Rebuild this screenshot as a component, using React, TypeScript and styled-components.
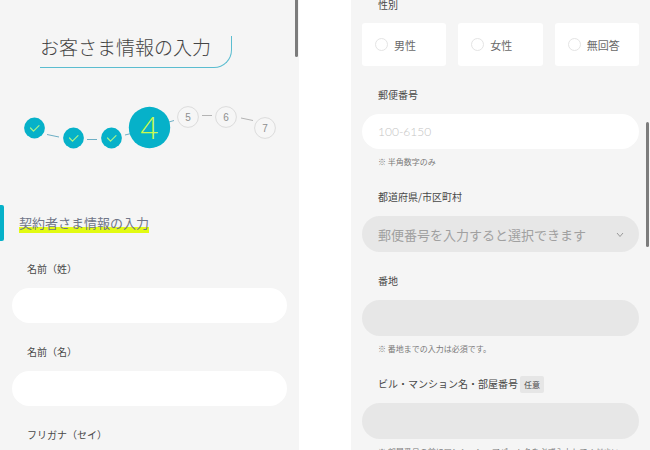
import React from "react";
import styled, { createGlobalStyle } from "styled-components";

const Global = createGlobalStyle`
  * { box-sizing: border-box; }
  html, body, #root { margin: 0; height: 100%; }
  body {
    background: #fff;
    color: #555;
    font-family: "Noto Sans CJK JP", sans-serif;
    overflow: hidden;
  }
  input, select { font-family: inherit; }
`;

const Page = styled.div`
  display: grid;
  grid-template-columns: 1fr 1fr;
  column-gap: 52px;
  height: 100vh;
  overflow: hidden;
`;

const Screen = styled.section<{ $inset: number }>`
  --inset: ${(p) => p.$inset}px;
  position: relative;
  min-width: 0;
  overflow: hidden;
  background: #f5f5f5;
`;

const ScrollThumb = styled.span<{ $top: number; $height: number }>`
  position: absolute;
  top: ${(p) => p.$top}px;
  right: 1px;
  width: 3px;
  height: ${(p) => p.$height}px;
  border-radius: 2px;
  background: #7c7c7c;
`;

const Title = styled.h1`
  width: fit-content;
  height: 32px;
  margin: 36px 0 0 40px;
  padding-right: 20px;
  border: solid #5bbdd0;
  border-width: 0 1px 1px 0;
  border-radius: 0 0 18px 0;
  color: #444;
  font-size: 19px;
  font-weight: 300;
  line-height: 21px;
  white-space: nowrap;
`;

const Steps = styled.svg`
  display: block;
  width: 256px;
  height: 48px;
  margin: 36px 0 0 22px;
`;

const StepNumber = styled.text`
  fill: #8e8e8e;
  font-family: "Liberation Sans", sans-serif;
  font-size: 10px;
  text-anchor: middle;
`;

const CurrentNumber = styled.text`
  fill: #c8fa50;
  font-family: "Open Sans", sans-serif;
  font-size: 31px;
  font-weight: 300;
  text-anchor: middle;
`;

const SectionHead = styled.div`
  display: flex;
  align-items: center;
  gap: 15px;
  height: 36px;
  margin: 53px 0 18px;
`;

const SectionBar = styled.span`
  width: 4px;
  height: 36px;
  border-radius: 0 2px 2px 0;
  background: #06b1c9;
`;

const SectionTitle = styled.h2`
  margin: 0;
  background: linear-gradient(transparent 14px, #e2fb12 14px);
  color: #707688;
  font-size: 13px;
  font-weight: 400;
  line-height: 20px;
`;

const Field = styled.div`
  margin: 0 var(--inset) 19px;
`;

const LabelRow = styled.div`
  display: flex;
  align-items: center;
  gap: 2px;
  height: 29px;
  padding: 0 0 9px calc(27px - var(--inset));
`;

const Label = styled.label`
  color: #484848;
  font-size: 10px;
  line-height: 20px;
  white-space: nowrap;
`;

const Badge = styled.span`
  padding: 0 4px;
  border-radius: 2px;
  background: #e6e6e6;
  color: #484848;
  font-size: 8px;
  line-height: 17px;
`;

const TextBox = styled.input`
  display: block;
  width: 100%;
  height: 35px;
  padding: 0 16px;
  border: 0;
  border-radius: 18px;
  background: #fff;
  font-family: Lato, sans-serif;
  font-size: 12px;
  font-weight: 300;
  &::placeholder { color: #c4c4c4; opacity: 1; }
  &:disabled { height: 36px; background: #e7e7e7; }
`;

const SelectWrap = styled.div`
  position: relative;
`;

const Select = styled.select`
  display: block;
  width: 100%;
  height: 36px;
  padding: 0 30px 0 16px;
  border: 0;
  border-radius: 18px;
  background: #e7e7e7;
  color: #a0a0a0;
  font-size: 13px;
  appearance: none;
  opacity: 1;
`;

const Chevron = styled.svg`
  position: absolute;
  top: 16px;
  right: 15px;
  width: 8px;
  height: 6px;
  pointer-events: none;
`;

const Hint = styled.p`
  margin: 7px 0 0 16px;
  color: #7a7a7a;
  font-size: 8px;
  line-height: 12px;
  white-space: nowrap;
`;

const Choices = styled.fieldset`
  display: grid;
  grid-template-columns: repeat(3, 1fr);
  gap: 12px;
  margin: 0 var(--inset) 19px;
  padding: 0;
  border: 0;
`;

const Legend = styled.legend`
  height: 23px;
  padding: 0 0 0 16px;
  color: #484848;
  font-size: 10px;
  line-height: 9px;
`;

const Choice = styled.label`
  display: flex;
  align-items: center;
  gap: 6px;
  height: 43px;
  padding-left: 13px;
  border-radius: 3px;
  background: #fff;
  color: #6a6a6a;
  font-size: 11px;
  white-space: nowrap;
`;

const Radio = styled.input`
  flex: none;
  width: 13px;
  height: 13px;
  margin: 0;
  border: 1px solid #e4e4e4;
  border-radius: 50%;
  background: #fff;
  appearance: none;
  &:checked { border: 4px solid #06b1c9; }
`;

const doneSteps = [
  { x: 12, y: 24 },
  { x: 51, y: 34 },
  { x: 89, y: 34 },
];

const nextSteps = [
  { n: 5, x: 166, y: 13 },
  { n: 6, x: 204, y: 13 },
  { n: 7, x: 243, y: 24 },
];

function Progress() {
  return (
    <Steps viewBox="0 0 256 48" role="img" aria-label="4 / 7">
      <g fill="none" stroke="#6dafc5">
        <path d="M25 30.500l12 2.500M65 35.500h10M103 31l6-1.500M147 18l5-1.500" />
        <path stroke="#b4b4b4" d="M180 11.500h10M219 14l12 2.500" />
      </g>
      {doneSteps.map((s) => (
        <g key={s.x}>
          <circle cx={s.x + 0.5} cy={s.y} r="10.4" fill="#06b1c9" />
          <path
            d={`M${s.x - 3.5} ${s.y}l3 3.200 5.500-5.500`}
            fill="none"
            stroke="#a5f58a"
            strokeWidth="1.2"
            strokeLinecap="round"
            strokeLinejoin="round"
          />
        </g>
      ))}
      <circle cx="127.5" cy="23.500" r="20.7" fill="#06b1c9" />
      <CurrentNumber x="127" y="35">4</CurrentNumber>
      {nextSteps.map((s) => (
        <g key={s.n}>
          <circle cx={s.x} cy={s.y} r="10.4" fill="#f6f6f6" stroke="#dcdcdc" />
          <StepNumber x={s.x} y={s.y + 4}>{s.n}</StepNumber>
        </g>
      ))}
    </Steps>
  );
}

const nameFields = [
  { id: "family", label: "名前（姓）" },
  { id: "given", label: "名前（名）" },
  { id: "family-kana", label: "フリガナ（セイ）" },
];

export default function App() {
  return (
    <>
      <Global />
      <Page>
        <Screen $inset={12}>
          <ScrollThumb $top={-6} $height={63} />
          <Title>お客さま情報の入力</Title>
          <Progress />
          <SectionHead>
            <SectionBar />
            <SectionTitle>契約者さま情報の入力</SectionTitle>
          </SectionHead>
          {nameFields.map((f) => (
            <Field key={f.id}>
              <LabelRow><Label htmlFor={f.id}>{f.label}</Label></LabelRow>
              <TextBox id={f.id} />
            </Field>
          ))}
        </Screen>
        <Screen $inset={11}>
          <ScrollThumb $top={122} $height={125} />
          <Choices>
            <Legend>性別</Legend>
            {["男性", "女性", "無回答"].map((c) => (
              <Choice key={c}>
                <Radio type="radio" name="gender" value={c} />
                {c}
              </Choice>
            ))}
          </Choices>
          <Field>
            <LabelRow><Label htmlFor="zip">郵便番号</Label></LabelRow>
            <TextBox id="zip" placeholder="100-6150" inputMode="numeric" />
            <Hint>※ 半角数字のみ</Hint>
          </Field>
          <Field>
            <LabelRow><Label htmlFor="city">都道府県/市区町村</Label></LabelRow>
            <SelectWrap>
              <Select id="city" disabled>
                <option>郵便番号を入力すると選択できます</option>
              </Select>
              <Chevron viewBox="0 0 8 6" fill="none" stroke="#999">
                <path d="M1 1l3 3.500L7 1" />
              </Chevron>
            </SelectWrap>
          </Field>
          <Field>
            <LabelRow><Label htmlFor="street">番地</Label></LabelRow>
            <TextBox id="street" disabled />
            <Hint>※ 番地までの入力は必須です。</Hint>
          </Field>
          <Field>
            <LabelRow>
              <Label htmlFor="building">ビル・マンション名・部屋番号</Label>
              <Badge>任意</Badge>
            </LabelRow>
            <TextBox id="building" disabled />
            <Hint>※ 部屋番号の前にマンション・アパート名を必ず入力してください。</Hint>
          </Field>
        </Screen>
      </Page>
    </>
  );
}
